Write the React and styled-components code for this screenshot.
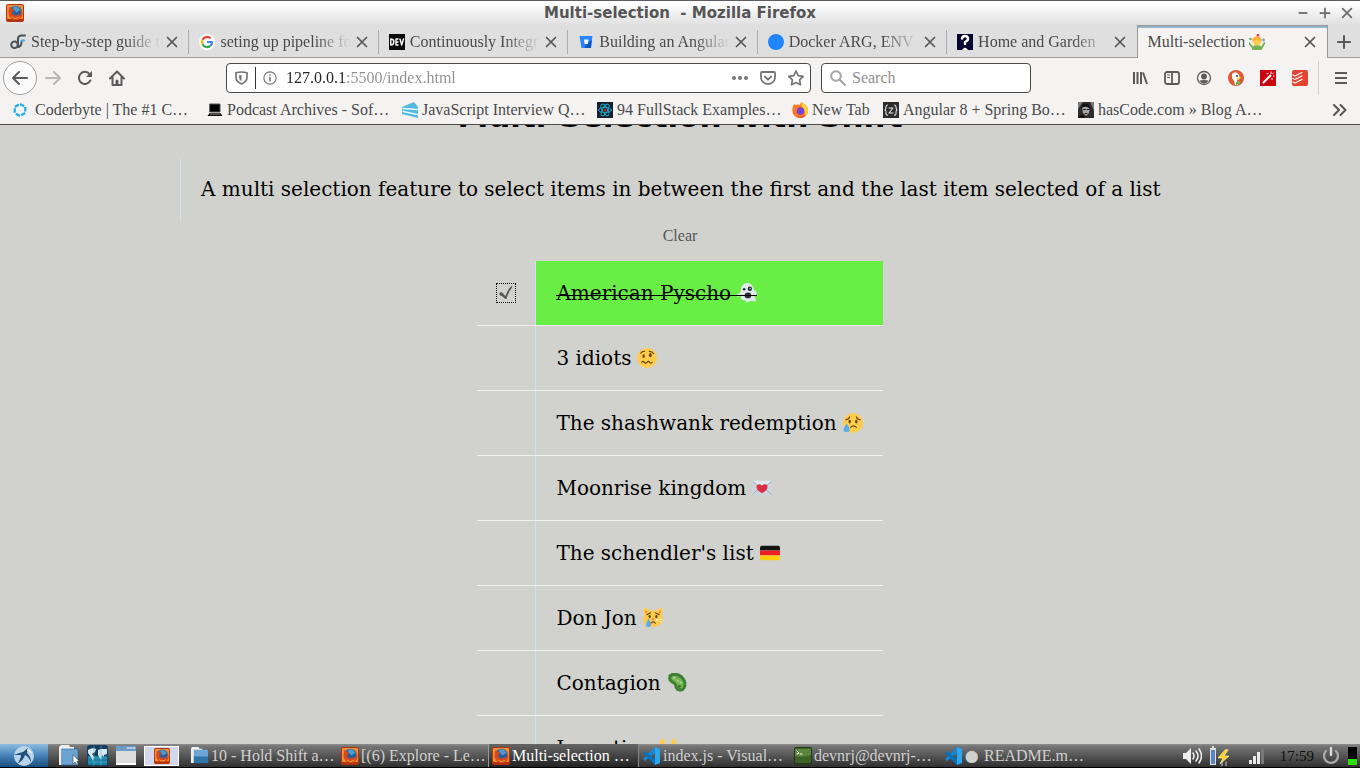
import React, { useState } from "react";
import styled, { createGlobalStyle, css } from "styled-components";

const serifUi = `"Liberation Serif", "Times New Roman", serif`;

const Global = createGlobalStyle`
  * { box-sizing: border-box; }
  html, body { margin: 0; height: 100%; overflow: hidden; }
  body { font-family: ${serifUi}; font-size: 16px; color: #4a4a4a; background: #d1d2cd; }
  button { font: inherit; color: inherit; border: 0; padding: 0; background: none; }
  a { color: inherit; text-decoration: none; }
  svg { display: block; flex: none; }
`;

const Desktop = styled.div`
  display: flex;
  flex-direction: column;
  height: 100vh;
`;

/* ---------- window frame ---------- */
const TitleBar = styled.header`
  display: grid;
  grid-template-columns: 1fr auto 1fr;
  align-items: center;
  height: 25px;
  padding: 0 6px;
  border-top: 1px solid #5c5c60;
  background: linear-gradient(#fff, #fafafa 20%, #e0e0e0);
`;
const WindowTitle = styled.div`
  font: bold 15px/24px "DejaVu Sans", sans-serif;
  color: #555;
  white-space: pre;
`;
const WindowButtons = styled.div`
  display: flex;
  justify-content: flex-end;
  gap: 8px;
  color: #6b6b6b;
`;

/* ---------- tabs ---------- */
const TabStrip = styled.nav`
  display: flex;
  height: 33px;
  background: linear-gradient(#9c9c9c, #9c9c9c) bottom / 100% 1px no-repeat #dfdfdf;
`;
const TabItem = styled.div`
  position: relative;
  display: flex;
  flex: 1 1 0;
  min-width: 0;
  align-items: center;
  gap: 5px;
  padding: 0 11px 0 10px;
  ${(p) =>
    p.$active
      ? css`
          background: #f4f3f2;
          border: 1px solid #9a9a9a;
          border-bottom: 0;
          box-shadow: inset 0 2px #94b4cc;
        `
      : css`
          &::after {
            content: "";
            position: absolute;
            right: 0;
            top: 5px;
            height: 24px;
            width: ${p.$last ? "0" : "1px"};
            background: #adadad;
          }
        `}
`;
const TabTitle = styled.a`
  display: flex;
  align-items: center;
  gap: 4px;
  flex: 1;
  min-width: 0;
  overflow: hidden;
  line-height: 22px;
  white-space: nowrap;
  color: #4a4a4a;
  ${(p) => p.$fade && css`mask-image: linear-gradient(90deg, #000 calc(100% - 36px), transparent);`}
`;
const NewTab = styled.button`
  display: grid;
  place-items: center;
  width: 32px;
`;

/* ---------- navigation ---------- */
const Toolbar = styled.div`
  display: flex;
  align-items: center;
  height: 40px;
  padding: 0 3px;
  background: #f4f3f2;
  color: #5b5b5b;
`;
const ToolButton = styled.button`
  display: grid;
  place-items: center;
  width: 32px;
  height: 32px;
  color: ${(p) => (p.$dim ? "#b8b8b8" : "inherit")};
`;
const BackButton = styled(ToolButton)`
  width: 34px;
  height: 34px;
  border: 1px solid #a0a0a0;
  border-radius: 50%;
  background: #fbfbfb;
`;
const Spring = styled.div`
  flex: 0 1 93px;
`;
const Field = styled.div`
  display: flex;
  align-items: center;
  height: 30px;
  background: #fff;
  border: 1px solid #4a4a4a;
  border-radius: 4px;
  color: #757575;
`;
const UrlField = styled(Field)`
  flex: 1;
  gap: 12px;
  padding: 0 6px 0 8px;
  margin-right: 10px;
`;
const SearchField = styled(Field)`
  width: 210px;
  gap: 6px;
  padding: 0 8px;
`;
const FieldInput = styled.input`
  flex: 1;
  min-width: 0;
  padding: 0;
  border: 0;
  outline: 0;
  font: inherit;
  line-height: 22px;
  background: none;
  color: #8a8a8a;
  &::placeholder { color: #8f8f8f; opacity: 1; }
`;
const UrlInput = styled(FieldInput)`
  color: transparent;
  background: linear-gradient(90deg, #222 60px, #8e8e8e 60px);
  background-clip: text;
`;
const SiteInfo = styled.div`
  display: flex;
  align-items: center;
  gap: 7px;
  margin-right: -3px;
`;
const Divider = styled.span`
  width: 1px;
  height: 22px;
  background: #333;
`;
const MenuDivider = styled.span`
  width: 1px;
  height: 34px;
  margin: 0 6px 0 2px;
  background: #d0d0d0;
`;

/* ---------- bookmarks ---------- */
const BookmarkBar = styled.nav`
  display: flex;
  align-items: center;
  height: 27px;
  padding: 0 12px 2px;
  background: #f4f3f2;
  border-bottom: 1px solid #4c4c4c;
`;
const Bookmark = styled.a`
  display: flex;
  align-items: center;
  gap: ${(p) => (p.$wide ? 7 : 4)}px;
  width: ${(p) => (p.$short ? 91 : 195)}px;
  line-height: 20px;
  white-space: nowrap;
`;
const Overflow = styled.button`
  margin-left: auto;
`;

/* ---------- page ---------- */
const Page = styled.main`
  flex: 1;
  min-height: 0;
  overflow: hidden;
  background: #d1d2cd;
  color: #000;
  font: 20px/24px "DejaVu Serif", serif;
`;
const Content = styled.div`
  display: flex;
  flex-direction: column;
  align-items: center;
  max-width: 1000px;
  margin: -28px auto 0;
`;
const Heading = styled.h1`
  margin: 0 0 22px;
  font: bold 31px/38px "DejaVu Sans", sans-serif;
`;
const Intro = styled.p`
  width: 100%;
  margin: 0;
  padding: 20px 0 20px 20px;
  border-left: 1px solid #d0e0f8;
`;
const ClearButton = styled.button`
  height: 20px;
  margin: 5px 0 15px;
  font: 16px/20px ${serifUi};
  color: #555;
`;
const List = styled.ul`
  margin: 0;
  padding: 0;
  list-style: none;
`;
const Row = styled.li`
  display: flex;
  align-items: center;
  border-bottom: 1px solid #f1f1f1;
`;
const Check = styled.input`
  appearance: none;
  width: 18px;
  height: 18px;
  margin: 0 20px;
  outline: ${(p) => (p.checked ? "1px dotted #000" : "0")};
  &::before {
    content: "";
    display: ${(p) => (p.checked ? "block" : "none")};
    width: 18px;
    height: 18px;
    background: #555;
    clip-path: path("M2 9 L4 8 L8 12 Q10 6 14 2 L15 3 Q11 8 9 15 L8 15 Q5 12 2 11 Z");
  }
`;
const Film = styled.label`
  display: flex;
  flex: 1;
  align-items: center;
  padding: 20px;
  border-left: 1px solid #d0e0f8;
  background: ${(p) => (p.$done ? "#68ee45" : "transparent")};
`;
const FilmText = styled.span`
  position: relative;
  display: flex;
  align-items: center;
  gap: 6px;
  white-space: nowrap;
  ${(p) =>
    p.$done &&
    css`
      &::after {
        content: "";
        position: absolute;
        left: 0;
        right: 0;
        top: 14px;
        height: 1px;
        background: #000;
      }
    `}
`;

/* ---------- desktop panel ---------- */
const Panel = styled.footer`
  display: flex;
  align-items: center;
  height: 24px;
  color: #d0d0d0;
  border-bottom: 1px solid #000;
  background: linear-gradient(#8f8f8f, #757575 10%, #303030);
  line-height: 22px;
`;
const StartButton = styled.button`
  display: grid;
  place-items: center;
  width: 48px;
  height: 23px;
  background: linear-gradient(#90bce0, #4583b8 50%, #174d7c);
`;
const Launchers = styled.div`
  display: flex;
  gap: 8px;
  padding: 0 8px 0 10px;
`;
const Workspace = styled.button`
  display: grid;
  place-items: center;
  width: 35px;
  height: 20px;
  margin-right: 7px;
  border: 1px solid #fff;
  background: #d4d8ee;
`;
const Tasks = styled.div`
  display: flex;
  flex: 0 1 906px;
  min-width: 0;
`;
const Task = styled.button`
  display: flex;
  flex: 1 1 0;
  min-width: 0;
  align-items: center;
  gap: 2px;
  height: 23px;
  padding-left: 4px;
  white-space: nowrap;
  ${(p) =>
    p.$active &&
    css`
      color: #fff;
      box-shadow: inset 1px 0 #999, inset -1px 0 #888;
      background: linear-gradient(#666, #222);
    `}
`;
const Unsaved = styled.span`
  margin-right: 4px;
  font-size: 12px;
`;
const Tray = styled.div`
  display: flex;
  align-items: center;
  gap: 8px;
  margin-left: auto;
  padding-right: 3px;
`;
const Clock = styled.time`
  padding-left: 6px;
  font-size: 15px;
  color: #111;
`;

/* ---------- drawings ---------- */
const Svg = ({ s = 16, w, h, v = "0 0 16 16", children, ...rest }) => (
  <svg width={w || s} height={h || s} viewBox={v} fill="none" stroke="currentColor" strokeWidth="2" strokeLinecap="round" strokeLinejoin="round" aria-hidden="true" {...rest}>
    {children}
  </svg>
);
const Close = () => <Svg s={12} v="0 0 12 12" strokeWidth="1.7" stroke="#555"><path d="M1.5 1.5l9 9M10.5 1.5l-9 9" /></Svg>;
const Firefox = ({ s = 18 }) => (
  <Svg s={s} v="0 0 18 18" stroke="none">
    <rect width="18" height="18" rx="2" fill="#b5330c" />
    <rect x="1" y="1" width="16" height="14" rx="1" fill="#f0913a" />
    <circle cx="9.500" cy="8" r="6.200" fill="#2a5f9c" />
    <path d="M7 3c3-2 6 0 8 4-3-2-3 2-5 1-1-2-3-2-3-5z" fill="#4f9bcb" />
    <path d="M4 2c0 2 1 2 3 3l1 2-2 1c0 3 3 4 6 3 3 0 4-3 3-6 3 5 1 10-4 11-6 1-11-5-7-14z" fill="#d8481a" />
    <path d="M5 12c3 3 7 2 9 0-2 4-7 4-9 0z" fill="#f4a33a" />
  </Svg>
);
const VsCode = () => (
  <Svg s={18} v="0 0 18 18" stroke="none">
    <path d="M12 0l5 2v14l-5 2z" fill="#2aa7ee" />
    <path d="M12 0v6L2 14l-2-2z" fill="#1687d4" />
    <path d="M12 18v-6L2 4 0 6z" fill="#0871b8" />
  </Svg>
);
const favicons = {
  df: <Svg strokeWidth="2"><circle cx="4.500" cy="10.800" r="3.300" stroke="#4b5358" /><path d="M8 12V5q0-3 3-3.500h4" stroke="#4b5358" /><path d="M8 13q3.500-.500 3.500-5" stroke="#4b5358" /><path d="M11.500 6.500h2.500" stroke="#34b2e8" /></Svg>,
  google: <Svg stroke="none"><circle cx="8" cy="8" r="8" fill="#fff" /><g fill="none" strokeWidth="2.2" strokeLinecap="butt"><path d="M11.500 4.400A5 5 0 0 0 3.500 5.800" stroke="#ea4335" /><path d="M3.500 5.800a5 5 0 0 0 0 4.400" stroke="#fbbc05" /><path d="M3.500 10.200a5 5 0 0 0 7.800 1.600" stroke="#34a853" /><path d="M8 8h5q0 2.300-1.700 3.800" stroke="#4285f4" /></g></Svg>,
  dev: <Svg><rect width="16" height="16" fill="#0a0a0a" stroke="none" /><path d="M1.800 5v6q3 0 3-3t-3-3M9 5H7v6h2M7 8h2M11 5l1.700 6L14.500 5" stroke="#fff" strokeWidth="1.4" /></Svg>,
  bucket: <Svg stroke="none"><path d="M1.500 2h13l-2 12h-9z" fill="#2684ff" /><path d="M8 10l6-4-1 8H7z" fill="#0d55cb" /><path d="M6 5.500h4.500l-.700 4.500H6.700z" fill="#fff" /></Svg>,
  blue: <Svg stroke="none"><circle cx="8" cy="8" r="8" fill="#2085f8" /></Svg>,
  home: <Svg><rect width="16" height="16" fill="#080830" stroke="none" /><path d="M5 4.500q.500-2.500 3-2.500t3 2.300-3 3.700v2" stroke="#fff" strokeWidth="2.400" /><path d="M5.500 16q2.500-4 5 0z" fill="#fff" stroke="#fff" strokeWidth="1" /></Svg>,
};
const bookmarkIcons = {
  coder: <Svg strokeWidth="2.3" stroke="#25aee8" strokeLinecap="butt"><path d="M8 2l5.300 3v6L8 14l-5.300-3V5z" strokeDasharray="4.6 1.5" /></Svg>,
  laptop: <Svg stroke="none"><path d="M3 2h10v8H3z" fill="#000" stroke="#555" strokeWidth="1" /><path d="M2.500 11h11l2 3H.500z" fill="#111" /><path d="M3 12h10" stroke="#aaa" strokeWidth=".8" /></Svg>,
  cake: <Svg stroke="none"><path d="M0 5L12 0l4 5v11L0 12z" fill="#4fbadf" /><path d="M1 6.500l14.500 1M1 9.500l14.500 3" stroke="#e8faff" strokeWidth="1.3" /></Svg>,
  react: <Svg strokeWidth="1" stroke="#14a8c5"><rect width="16" height="16" fill="#17202b" stroke="none" /><g><ellipse cx="8" cy="8" rx="6.500" ry="2.600" /><ellipse cx="8" cy="8" rx="6.500" ry="2.600" transform="rotate(60 8 8)" /><ellipse cx="8" cy="8" rx="6.500" ry="2.600" transform="rotate(120 8 8)" /></g><circle cx="8" cy="8" r="1.600" fill="#b22" stroke="none" /></Svg>,
  fox: <Svg stroke="none"><path d="M2 2q1 1 2 1 2-1 4 0l1-3q5 2 7 7c1 6-4 9-8 9C2 16-2 10 2 2z" fill="#ff7a22" /><path d="M9 0q6 3 7 8 0 5-4 7 2-4 0-7-3-4-3-8z" fill="#ffd237" /><circle cx="8.500" cy="9" r="3.800" fill="#7443d8" /><path d="M1 8c0 7 9 9 13 4-2 6-12 4-13-4z" fill="#f5324d" /></Svg>,
  json: <Svg strokeWidth="1.1"><rect width="16" height="16" fill="#2c2c2c" stroke="none" /><path d="M4.500 3Q3 3 3 5t-1 3q1 0 1 3t1.500 2M11.500 3Q13 3 13 5t1 3q-1 0-1 3t-1.500 2M6 6h4l-4 5h4" stroke="#e5e5e5" /></Svg>,
  face: <Svg stroke="none"><rect width="16" height="16" fill="#2c2c2c" /><path d="M0 0h5L0 7zM12 0h4v9z" fill="#777" /><path d="M4 5q4-3 8 0l-1 6-3 3-3-3z" fill="#a5a5a5" /><path d="M3 7q0-6 6-5 4 1 3 6-1-3-3-3-4-1-6 2z" fill="#111" /><path d="M5.500 7.500h2M9 7.500h2M7 11.500h2" stroke="#222" strokeWidth="1" /><path d="M0 16l4-4 3 3v1z" fill="#111" /></Svg>,
};

const Face = ({ children }) => (
  <Svg s={20} v="0 0 21 21" stroke="#664500" strokeWidth="1.200">
    <circle cx="10.500" cy="10.500" r="10.500" fill="#ffcc4d" stroke="none" />
    {children}
  </Svg>
);
const emoji = {
  ghost: <Svg s={20} v="0 0 21 21" stroke="none"><path d="M4 9C4 3 7 0 11 0s6 3 7 8c3-1 4 5 0 6 1 2 2 2 2 5-3 1-4-1-6 0-3 2-5 1-5-1-4 1-5-2-5-5-2 1-5 3-4-1 2-1 3-1 4-3z" fill="#e1e8ed" /><circle cx="7.500" cy="6.500" r="1.300" fill="#292f33" /><circle cx="13.500" cy="6" r="2.300" fill="#292f33" /><circle cx="13.800" cy="5.800" r=".8" fill="#88c9f9" /><ellipse cx="11.500" cy="13" rx="3.500" ry="3" fill="#292f33" /></Svg>,
  woozy: <Face><ellipse cx="7" cy="8.500" rx="1.300" ry="2" fill="#664500" stroke="none" /><ellipse cx="14" cy="7.500" rx="1.500" ry="2.200" fill="#664500" stroke="none" /><path d="M4 5.500q1.500-2.500 4-2M13 3.500q3 0 4.500 2.500M5 15q1.300-1.800 2.700 0t2.800 0 2.800 0 2.700 0" /></Face>,
  sweat: <Face><ellipse cx="7" cy="9" rx="1.300" ry="2" fill="#664500" stroke="none" /><ellipse cx="14" cy="9" rx="1.300" ry="2" fill="#664500" stroke="none" /><path d="M3 7q3 0 4-3M14 4q1 3 4 3M8 15q3-3 6 0" /><path d="M4 11q-7 9 0 9 6 0 0-9z" fill="#5dadec" stroke="none" /></Face>,
  letter: <Svg s={20} v="0 0 21 21" stroke="none"><rect y="3" width="21" height="15" rx="2" fill="#ccd6dd" /><path d="M1 4l8 7q1.500 1 3 0l8-7M1 17l7-7M20 17l-7-7" stroke="#99aab5" strokeWidth="1" /><path d="M1 3h19l-8 7h-3z" fill="#e1e8ed" /><path d="M10.500 16q-7-4-5.500-8 2-3 5.500 0 3.500-3 5.500 0 1.500 4-5.500 8z" fill="#dd2e44" /></Svg>,
  flag: <Svg s={20} v="0 0 21 21" stroke="none"><path d="M0 8V5q0-2 2-2h17q2 0 2 2v3z" fill="#141414" /><path d="M0 8h21v5H0z" fill="#ed1f24" /><path d="M0 13h21v3q0 2-2 2H2q-2 0-2-2z" fill="#ffcc05" /></Svg>,
  cat: <Svg s={20} v="0 0 21 21" stroke="#664500" strokeWidth="1.200"><path d="M1 0q4 0 6 3 3-1 7 0 2-3 6-3 1 4 0 8 3 8-5 11-5 2-10 0Q-2 16 1 8 0 4 1 0z" fill="#ffcc4d" stroke="none" /><path d="M2 2l3 2-2 2zM19 2l-3 2 2 2z" fill="#f28a48" stroke="none" /><ellipse cx="7" cy="9" rx="1.200" ry="1.800" fill="#664500" stroke="none" /><ellipse cx="14" cy="9" rx="1.200" ry="1.800" fill="#664500" stroke="none" /><path d="M4 7l4-2M17 7l-4-2M8 16q3-3 5 0" /><path d="M9 11h3l-1.500 2z" fill="#e75a70" stroke="none" /><path d="M6 11q-6 9 0 9 5 0 0-9z" fill="#5dadec" stroke="none" /><path d="M14 12h7M14 13l6 2" stroke="#fff0c0" strokeWidth=".8" /></Svg>,
  microbe: <Svg s={20} v="0 0 21 21" stroke="#3e8132"><path d="M3 3c5-5 16 0 16 9 0 7-9 9-10 1C8 9 1 10 3 3z" strokeWidth="3" strokeDasharray=".4 2.200" /><path d="M4 4c5-4 14 1 14 8 0 6-7 7-8 1C9 8 2 9 4 4z" fill="#77b255" strokeWidth="1.300" /><circle cx="13" cy="14" r="1.500" fill="#3e721d" stroke="none" /><path d="M7 5h1M11 8h1M14 10h1" stroke="#a6d388" /></Svg>,
  hands: <Svg s={20} v="0 0 21 21" stroke="none"><path d="M2 6V3l2-1 1-2 2 2v8l-2 8H2zM19 6V3l-2-1-1-2-2 2v8l2 8h3z" fill="#ffcc4d" /></Svg>,
  juggler: <Svg stroke="none"><path d="M3 16q0-5 5-5t5 5z" fill="#77b255" /><path d="M0 9l4 5M15.500 9l-3 5" stroke="#77b255" strokeWidth="2" /><circle cx="8" cy="7.500" r="4" fill="#ffcc4d" /><path d="M3.500 8q-1-5.500 4.500-5.500T12.500 8Q8 3 3.500 8z" fill="#ffac33" /><circle cx="9" cy="1.300" r="1.300" fill="#dd2e44" /><circle cx="1.500" cy="5" r="1.300" fill="#77b255" /><circle cx="14.500" cy="6" r="1.400" fill="#5dadec" /></Svg>,
};

const tabs = [
  ["df", "Step-by-step guide to"],
  ["google", "seting up pipeline for"],
  ["dev", "Continuously Integr"],
  ["bucket", "Building an Angular"],
  ["blue", "Docker ARG, ENV a"],
  ["home", "Home and Garden"],
];
const bookmarks = [
  ["coder", "Coderbyte | The #1 C…", true],
  ["laptop", "Podcast Archives - Sof…"],
  ["cake", "JavaScript Interview Q…"],
  ["react", "94 FullStack Examples…"],
  ["fox", "New Tab"],
  ["json", "Angular 8 + Spring Bo…"],
  ["face", "hasCode.com » Blog A…"],
];
const films = [
  ["American Pyscho", "ghost"],
  ["3 idiots", "woozy"],
  ["The shashwank redemption", "sweat"],
  ["Moonrise kingdom", "letter"],
  ["The schendler's list", "flag"],
  ["Don Jon", "cat"],
  ["Contagion", "microbe"],
  ["Inception", "hands"],
];
const folder = <Svg s={19} v="0 0 20 20" stroke="none"><path d="M1 3l1-2h7l1 2h3v15H1z" fill="#eee" /><path d="M4 4h14q1 0 1 2v12H4z" fill="#6ba6d6" /><path d="M4 11h15v7H4z" fill="#2e75ac" /></Svg>;
const terminal = <Svg s={18} v="0 0 18 18" stroke="none"><rect width="18" height="18" rx="2" fill="#26381b" /><rect x="1" y="1" width="16" height="15" rx="1" fill="#3d6226" /><path d="M1 2h16v6Q9 11 1 9z" fill="#5d8540" /><path d="M3 4l2 2-2 1M6 7h2" stroke="#fff" strokeWidth="1" /></Svg>;
const tasks = [
  { icon: folder, text: "10 - Hold Shift a…" },
  { icon: <Firefox />, text: "[(6) Explore - Le…" },
  { icon: <Firefox />, text: "Multi-selection …", active: true },
  { icon: <VsCode />, text: "index.js - Visual…" },
  { icon: terminal, text: "devnrj@devnrj-…" },
  { icon: <VsCode />, text: "README.m…", unsaved: true },
];

const Tabs = () => (
  <TabStrip aria-label="Tabs">
    {tabs.map(([icon, title], i) => (
      <TabItem key={title} $last={i === tabs.length - 1}>
        {favicons[icon]}
        <TabTitle href="#" $fade>{title}</TabTitle>
        <button aria-label={`Close ${title}`}><Close /></button>
      </TabItem>
    ))}
    <TabItem $active>
      <TabTitle href="#">Multi-selection {emoji.juggler}</TabTitle>
      <button aria-label="Close Multi-selection"><Close /></button>
    </TabItem>
    <NewTab aria-label="New tab"><Svg strokeWidth="2" stroke="#555"><path d="M8 2v12M2 8h12" /></Svg></NewTab>
  </TabStrip>
);

const Navigation = () => (
  <Toolbar>
    <BackButton aria-label="Back"><Svg><path d="M15 8H1.500M7 2L1 8l6 6" /></Svg></BackButton>
    <ToolButton aria-label="Forward" $dim><Svg><path d="M1 8h13.500M9 2l6 6-6 6" /></Svg></ToolButton>
    <ToolButton aria-label="Reload"><Svg><path d="M13.300 10.500A6 6 0 1 1 12.500 4" /><path d="M15 1v6H9z" fill="currentColor" stroke="none" /></Svg></ToolButton>
    <ToolButton aria-label="Home"><Svg><path d="M1 8.500L8 1.500l7 7M3.500 7.500V15h9V7.500" /><path d="M8 15v-4" strokeWidth="3" /></Svg></ToolButton>
    <Spring />
    <UrlField>
      <SiteInfo>
        <Svg w={13} h={14} v="0 0 13 14" strokeWidth="1.700"><path d="M1 1.800q5.500-1.600 11 0v4.500q0 4.500-5.500 6.700Q1 10.800 1 6.300z" /><path d="M6.500 4v6Q4 9 4 6V4.200z" fill="currentColor" strokeWidth="0" /></Svg>
        <Divider />
        <Svg s={14} v="0 0 16 16" strokeWidth="1.300"><circle cx="8" cy="8" r="7" /><path d="M8 7.500v4M8 4.300v.400" strokeWidth="1.800" /></Svg>
      </SiteInfo>
      <UrlInput aria-label="Address" defaultValue="127.0.0.1:5500/index.html" />
      <Svg stroke="none" fill="currentColor"><circle cx="2" cy="8" r="2" /><circle cx="8" cy="8" r="2" /><circle cx="14" cy="8" r="2" /></Svg>
      <Svg strokeWidth="1.800"><path d="M2 2h12q1 0 1 1v4.500a7 6.500 0 0 1-14 0V3q0-1 1-1zM4.800 6.500L8 9.500l3.200-3" /></Svg>
      <Svg strokeWidth="1.700"><path d="M8 1l2.200 4.600 5 .7-3.600 3.500.9 5L8 12.500l-4.500 2.300.9-5L.8 6.300l5-.7z" /></Svg>
    </UrlField>
    <SearchField>
      <Svg stroke="#a5a5a5"><circle cx="6" cy="6" r="4.800" /><path d="M9.500 9.500L15 15" /></Svg>
      <FieldInput aria-label="Search" placeholder="Search" />
    </SearchField>
    <Spring />
    <ToolButton aria-label="Library"><Svg strokeLinecap="butt"><path d="M2 2v12M5.500 2v12M9 2v12M11 2.500L15 14" /></Svg></ToolButton>
    <ToolButton aria-label="Sidebars"><Svg strokeWidth="1.800"><rect x="1" y="2" width="14" height="12" rx="2" /><path d="M8 2v12" /><path d="M3.500 5h2M3.500 7.500h2" strokeWidth="1" /></Svg></ToolButton>
    <ToolButton aria-label="Account"><Svg strokeWidth="1.300"><circle cx="8" cy="8" r="6.500" /><circle cx="8" cy="6.500" r="2.900" fill="currentColor" stroke="none" /><path d="M3.500 10.500q4.500-1 9 0-1.500 3-4.500 3t-4.500-3z" fill="currentColor" stroke="none" /></Svg></ToolButton>
    <ToolButton aria-label="DuckDuckGo"><Svg stroke="none"><circle cx="8" cy="8" r="8" fill="#de5833" /><path d="M4 4q4-4 7 1l1 4-3 1 1 5H7q0-4-3-7z" fill="#fff" /><circle cx="9" cy="6" r="1" fill="#234" /><path d="M9 8l5-1-3 2.500H9z" fill="#f7c32e" /><path d="M8 12l4-1v3l-4 1z" fill="#67bd47" /></Svg></ToolButton>
    <ToolButton aria-label="Wand"><Svg><rect width="16" height="16" fill="#c90510" stroke="none" /><path d="M3.500 12.500l7-7" stroke="#fff" /><path d="M11 2v1.500M13.500 6h.500M7 3.500h1M13 3.500l.500-.500M12 8.500v1" stroke="#fff" strokeWidth="1" /></Svg></ToolButton>
    <ToolButton aria-label="Todoist"><Svg><rect width="16" height="16" rx="2" fill="#e44332" stroke="none" /><path d="M1 5l2 1 7-3.500M1 8.500l2 1L10 6M1 12l2 1 7-3.500" stroke="#fff" strokeWidth="1.200" /></Svg></ToolButton>
    <MenuDivider />
    <ToolButton aria-label="Menu"><Svg strokeLinecap="butt"><path d="M2 3h12M2 8h12M2 13h12" /></Svg></ToolButton>
  </Toolbar>
);

export default function App() {
  const [done, setDone] = useState(["American Pyscho"]);
  const toggle = (name) => setDone((d) => (d.includes(name) ? d.filter((x) => x !== name) : [...d, name]));
  return (
    <Desktop>
      <Global />
      <TitleBar>
        <Firefox />
        <WindowTitle>{"Multi-selection  - Mozilla Firefox"}</WindowTitle>
        <WindowButtons>
          <button aria-label="Minimise"><Svg s={14}><path d="M3 8h10" strokeLinecap="butt" /></Svg></button>
          <button aria-label="Maximise"><Svg s={14}><path d="M8 2v12M2 8h12" strokeLinecap="butt" /></Svg></button>
          <button aria-label="Close"><Svg s={14}><path d="M3 3l10 10M13 3L3 13" /></Svg></button>
        </WindowButtons>
      </TitleBar>
      <Tabs />
      <Navigation />
      <BookmarkBar aria-label="Bookmarks">
        {bookmarks.map(([icon, text, wide]) => (
          <Bookmark key={text} href="#" $wide={wide} $short={icon === "fox"}>{bookmarkIcons[icon]}{text}</Bookmark>
        ))}
        <Overflow aria-label="More bookmarks"><Svg stroke="#555"><path d="M2 3l5 5-5 5M8.500 3l5 5-5 5" /></Svg></Overflow>
      </BookmarkBar>
      <Page>
        <Content>
          <Heading>Multi-Selection with Shift</Heading>
          <Intro>A multi selection feature to select items in between the first and the last item selected of a list</Intro>
          <ClearButton onClick={() => setDone([])}>Clear</ClearButton>
          <List>
            {films.map(([name, icon]) => {
              const on = done.includes(name);
              return (
                <Row key={name}>
                  <Check type="checkbox" id={icon} checked={on} onChange={() => toggle(name)} />
                  <Film htmlFor={icon} $done={on}><FilmText $done={on}>{name}{emoji[icon]}</FilmText></Film>
                </Row>
              );
            })}
          </List>
        </Content>
      </Page>
      <Panel>
        <StartButton aria-label="Start"><Svg s={20} v="0 0 20 20" stroke="none"><circle cx="10" cy="10" r="10" fill="#b9d3e8" /><path d="M0 9q5-2 9-3l5-4-1 5q4 4 4 9-3-6-6-7-1 5-8 9 4-5 4-9z" fill="#214e7c" /><path d="M13 3q4 1 5 5-2-3-5-3z" fill="#fff" /></Svg></StartButton>
        <Launchers>
          <button aria-label="File manager"><Svg s={21} v="0 0 21 21" stroke="none"><path d="M1 2l2-2h8l1 2h4v18H1z" fill="#eee" /><path d="M4 4h16v16H4z" fill="#6aa4d2" stroke="#2d5f8c" strokeWidth=".6" /><path d="M15 10v9l2-2 2 3 1-1-1-3h2z" fill="#fff" stroke="#444" strokeWidth=".6" /></Svg></button>
          <button aria-label="Web browser"><Svg s={21} v="0 0 21 21" stroke="none"><rect width="21" height="21" rx="3" fill="#153e62" /><path d="M1 11h19v9H1z" fill="#1980a5" /><path d="M1 5q4-3 8-1l-1 3-3 2 2 3-1 4-2-4-3-4zM11 5l3-1 6 0v5l-3 1 0 2-2-2-1 5-3-5z" fill="#d4e8ef" /><path d="M1 13h19M1 17h19M7 1v19M14 1v19" stroke="#70b8cd" strokeWidth=".5" /></Svg></button>
          <button aria-label="Show desktop"><Svg s={20} v="0 0 20 20" stroke="none"><rect width="20" height="19" rx="1" fill="#ddd" /><rect width="20" height="5" fill="#6a9bc7" /><path d="M11 2h2M14 2h2M17 2h2" stroke="#fff" strokeWidth="1" /><path d="M0 18h20" stroke="#fff" /></Svg></button>
        </Launchers>
        <Workspace aria-label="Workspace 1"><Firefox s={16} /></Workspace>
        <Tasks>
          {tasks.map(({ icon, text, active, unsaved }) => (
            <Task key={text} $active={active}>
              {icon}
              {unsaved && <Unsaved>⬤</Unsaved>}
              {text}
            </Task>
          ))}
        </Tasks>
        <Tray>
          <Svg s={20} v="0 0 20 20" stroke="#f0f0f0" strokeWidth="1.500"><path d="M1 7h3l5-5v16l-5-5H1z" fill="#f0f0f0" stroke="none" /><path d="M11 7q2 3 0 6M14 5q4 5 0 10M17 3q5 7 0 14" /></Svg>
          <Svg s={20} v="0 0 20 20" stroke="none"><rect x="0" y="2" width="6" height="17" fill="#ddd" /><rect x="1" y="4" width="4" height="14" fill="#5686c4" /><rect x="2" y="0" width="2" height="2" fill="#ddd" /><path d="M15 4l-7 8h5l-3 6 9-8h-5l4-6z" fill="#ffd321" stroke="#fff1a0" strokeWidth=".7" /><path d="M12 16v4M16 16v4" stroke="#ccc" strokeWidth="1" /></Svg>
          <Svg w={28} h={20} v="0 0 28 20" stroke="none"><g fill="#e9e9e9"><rect x="11" y="14" width="3" height="4" /><rect x="15" y="10" width="3" height="8" /><rect x="19" y="6" width="3" height="12" /></g><rect x="23" y="2" width="3" height="16" fill="#777" /></Svg>
          <Clock>17:59</Clock>
          <Svg s={18} v="0 0 18 18" stroke="#aaa" strokeWidth="2.300"><path d="M4 4a7 7 0 1 0 10 0" /><path d="M9 1v7" stroke="#ddd" /></Svg>
          <Svg w={9} h={18} v="0 0 9 18" stroke="none"><rect width="9" height="18" fill="#000" /><rect y="12" width="9" height="6" fill="#2de00b" /></Svg>
        </Tray>
      </Panel>
    </Desktop>
  );
}
